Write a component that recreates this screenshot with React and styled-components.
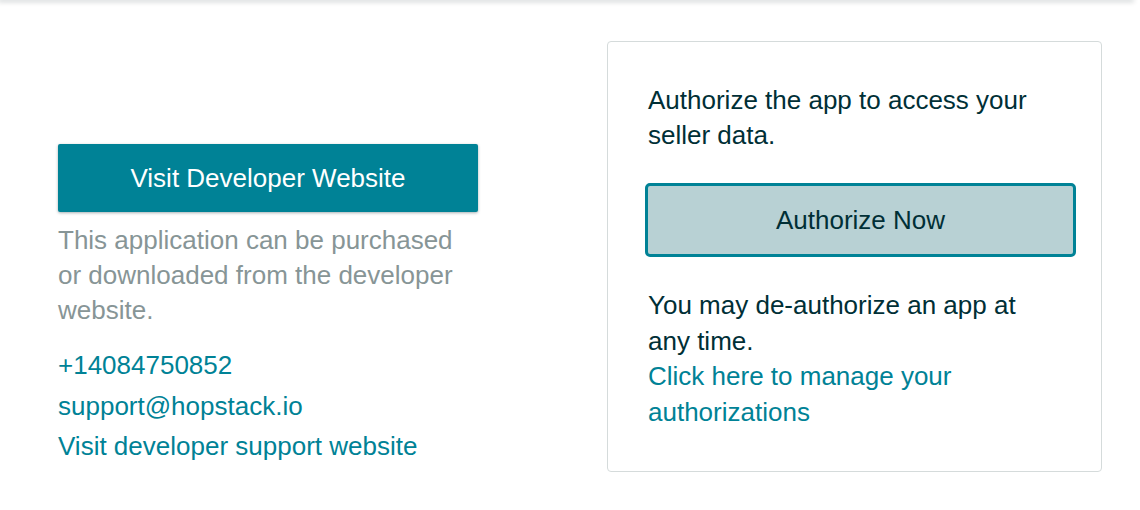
import styled, { createGlobalStyle } from "styled-components";

const GlobalStyle = createGlobalStyle`
  body {
    margin: 0;
    background: #ffffff;
    font-family: "Liberation Sans", Arial, sans-serif;
  }
`;

const App = () => {
  return (
    <>
      <GlobalStyle />
      <TopBar />
      <Page>
        <LeftColumn>
          <PrimaryButton>Visit Developer Website</PrimaryButton>
          <Note>
            This application can be purchased or downloaded from the developer
            website.
          </Note>
          <Contacts>
            <Link href="#">+14084750852</Link>
            <Link href="#">support@hopstack.io</Link>
            <Link href="#">Visit developer support website</Link>
          </Contacts>
        </LeftColumn>

        <Card>
          <CardText>Authorize the app to access your seller data.</CardText>
          <AuthorizeButton>Authorize Now</AuthorizeButton>
          <CardText $gap>
            You may de-authorize an app at any time.
            <br />
            <Link href="#" $inline>
              Click here to manage your authorizations
            </Link>
          </CardText>
        </Card>
      </Page>
    </>
  );
};

const TopBar = styled.div`
  height: 0;
  box-shadow: 0 0 5px 2px rgba(0, 28, 36, 0.18);
  margin-right: 8px;
`;

const Page = styled.main`
  display: flex;
  align-items: flex-start;
  padding: 41px 0 0 58px;
`;

const LeftColumn = styled.div`
  width: 420px;
  margin-top: 103px;
  display: flex;
  flex-direction: column;
`;

const PrimaryButton = styled.button`
  height: 68px;
  width: 100%;
  border: none;
  border-radius: 2px;
  background: #008296;
  color: #ffffff;
  font-family: inherit;
  font-size: 26px;
  padding-bottom: 0;
  box-shadow: 0 1px 3px rgba(0, 28, 36, 0.35);
  cursor: pointer;
`;

const Note = styled.p`
  margin: 11px 0 0;
  color: #879596;
  font-size: 26px;
  line-height: 35px;
`;

const Contacts = styled.div`
  margin-top: 17px;
  display: flex;
  flex-direction: column;
`;

const Link = styled.a`
  color: #008296;
  text-decoration: none;
  font-size: 26px;
  line-height: ${(p) => (p.$inline ? "35.7px" : "40.5px")};
`;

const Card = styled.section`
  box-sizing: border-box;
  width: 495px;
  height: 431px;
  margin-left: 129px;
  border: 1px solid #d5dbdb;
  border-radius: 4px;
  padding: 41px 25px 0 40px;
`;

const CardText = styled.p`
  margin: ${(p) => (p.$gap ? "31px" : "0")} 22px 0 0;
  color: #002f36;
  font-size: 26px;
  line-height: ${(p) => (p.$gap ? "35.7px" : "35px")};
`;

const AuthorizeButton = styled.button`
  display: block;
  box-sizing: border-box;
  width: calc(100% + 3px);
  height: 74px;
  margin: 30px 0 0 -3px;
  border: 3px solid #008296;
  border-radius: 5px;
  background: #b8d1d4;
  color: #002f36;
  font-family: inherit;
  font-size: 26px;
  cursor: pointer;
`;

export default App;
